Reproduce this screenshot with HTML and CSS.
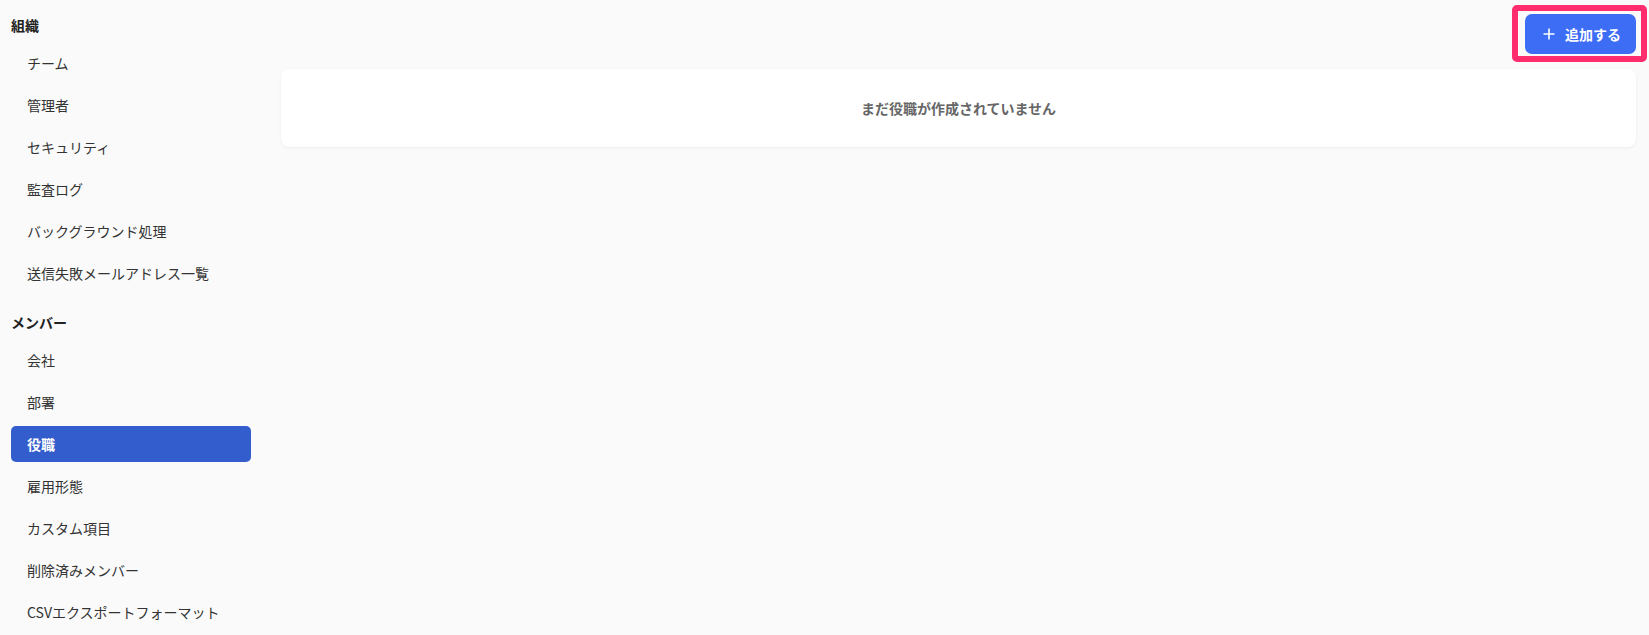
FILE: index.html
```html
<!DOCTYPE html>
<html lang="ja">
<head>
<meta charset="utf-8">
<title>役職</title>
<link rel="stylesheet" href="styles.css">
</head>
<body>
<div class="layout">
  <nav class="sidebar">
    <div class="section">
      <div class="section-title">組織</div>
      <a class="nav-item">チーム</a>
      <a class="nav-item">管理者</a>
      <a class="nav-item">セキュリティ</a>
      <a class="nav-item">監査ログ</a>
      <a class="nav-item">バックグラウンド処理</a>
      <a class="nav-item">送信失敗メールアドレス一覧</a>
    </div>
    <div class="section">
      <div class="section-title">メンバー</div>
      <a class="nav-item">会社</a>
      <a class="nav-item">部署</a>
      <a class="nav-item active">役職</a>
      <a class="nav-item">雇用形態</a>
      <a class="nav-item">カスタム項目</a>
      <a class="nav-item">削除済みメンバー</a>
      <a class="nav-item">CSVエクスポートフォーマット</a>
    </div>
  </nav>
  <main class="main">
    <div class="toolbar">
      <button class="btn-primary highlighted">
        <svg class="plus" width="12" height="12" viewBox="0 0 12 12"><path d="M6 0.5V11.5M0.5 6H11.5" stroke="currentColor" stroke-width="1.6" fill="none"/></svg>
        <span>追加する</span>
      </button>
    </div>
    <div class="card empty">まだ役職が作成されていません</div>
  </main>
</div>
</body>
</html>
```
FILE: styles.css
```css
* { box-sizing: border-box; }
html, body {
  margin: 0;
  height: 100%;
  background: #fafafa;
}
body {
  font-family: "Noto Sans CJK JP", "Noto Sans", sans-serif;
  font-size: 14px;
  color: #333;
}
.layout {
  display: flex;
  min-height: 100%;
}
.sidebar {
  width: 251px;
  flex: none;
  padding: 15px 0 0 11px;
  display: flex;
  flex-direction: column;
  gap: 21px;
}
.section {
  display: flex;
  flex-direction: column;
  gap: 6px;
}
.section-title {
  font-weight: 700;
  line-height: 20px;
  margin-bottom: 4px;
  color: #222;
}
.nav-item {
  display: flex;
  align-items: center;
  height: 36px;
  padding-left: 16px;
  border-radius: 5px;
  color: #333;
  cursor: pointer;
}
.nav-item.active {
  background: #335ccc;
  color: #fff;
  font-weight: 700;
}
.main {
  flex: 1;
  padding: 14px 13px 0 30px;
  display: flex;
  flex-direction: column;
  gap: 15px;
}
.toolbar {
  display: flex;
  justify-content: flex-end;
}
.btn-primary {
  position: relative;
  display: flex;
  align-items: center;
  gap: 10px;
  height: 40px;
  padding: 0 15px 0 18px;
  border: none;
  border-radius: 7px;
  background: #3d6cf5;
  color: #fff;
  font-family: inherit;
  font-size: 14px;
  font-weight: 700;
  cursor: pointer;
}
.btn-primary .plus { display: block; }
.highlighted::after {
  content: "";
  position: absolute;
  top: -9px;
  left: -13px;
  right: -11px;
  bottom: -8px;
  border: 6px solid #ff2d6e;
  border-radius: 5px;
  pointer-events: none;
}
.card {
  background: #fff;
  border-radius: 8px;
  box-shadow: 0 1px 3px rgba(0, 0, 0, 0.06);
}
.empty {
  height: 78px;
  display: flex;
  align-items: center;
  justify-content: center;
  color: #666;
  font-weight: 700;
  font-size: 14px;
}
```
